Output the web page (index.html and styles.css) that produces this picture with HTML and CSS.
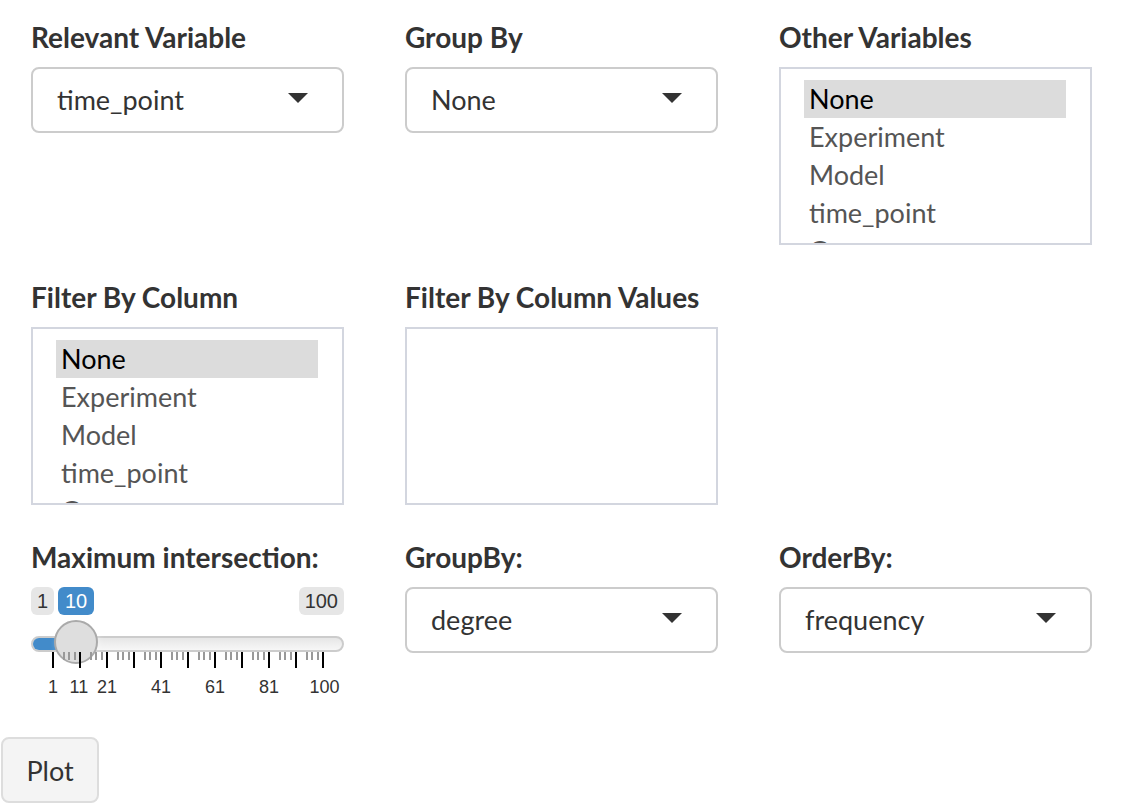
FILE: index.html
```html
<!DOCTYPE html>
<html>
<head>
<meta charset="utf-8">
<link rel="stylesheet" href="styles.css">
</head>
<body>
<div class="page">
  <div class="row">
    <div class="group">
      <label class="label">Relevant Variable</label>
      <div class="select"><span class="select-text">time_point</span><span class="caret"></span></div>
    </div>
    <div class="group">
      <label class="label">Group By</label>
      <div class="select"><span class="select-text">None</span><span class="caret"></span></div>
    </div>
    <div class="group">
      <label class="label">Other Variables</label>
      <div class="listbox">
        <div class="opt selected">None</div>
        <div class="opt">Experiment</div>
        <div class="opt">Model</div>
        <div class="opt">time_point</div>
        <div class="opt">Group</div>
      </div>
    </div>
  </div>
  <div class="row">
    <div class="group">
      <label class="label">Filter By Column</label>
      <div class="listbox">
        <div class="opt selected">None</div>
        <div class="opt">Experiment</div>
        <div class="opt">Model</div>
        <div class="opt">time_point</div>
        <div class="opt">Group</div>
      </div>
    </div>
    <div class="group">
      <label class="label">Filter By Column Values</label>
      <div class="listbox"></div>
    </div>
    <div class="group"></div>
  </div>
  <div class="row">
    <div class="group">
      <label class="label">Maximum intersection:</label>
      <div class="slider">
        <span class="bubble bubble-min">1</span>
        <span class="bubble bubble-val">10</span>
        <span class="bubble bubble-max">100</span>
        <div class="track"><div class="bar"></div></div>
        <div class="handle"></div>
        <div class="grid">
          <span class="pol" style="left:0%"></span>
          <span class="pol small" style="left:4%"></span><span class="pol small" style="left:6%"></span><span class="pol small" style="left:8%"></span>
          <span class="pol" style="left:10%"></span>
          <span class="pol small" style="left:14%"></span><span class="pol small" style="left:16%"></span><span class="pol small" style="left:18%"></span>
          <span class="pol" style="left:20%"></span>
          <span class="pol small" style="left:24%"></span><span class="pol small" style="left:26%"></span><span class="pol small" style="left:28%"></span>
          <span class="pol" style="left:30%"></span>
          <span class="pol small" style="left:34%"></span><span class="pol small" style="left:36%"></span><span class="pol small" style="left:38%"></span>
          <span class="pol" style="left:40%"></span>
          <span class="pol small" style="left:44%"></span><span class="pol small" style="left:46%"></span><span class="pol small" style="left:48%"></span>
          <span class="pol" style="left:50%"></span>
          <span class="pol small" style="left:54%"></span><span class="pol small" style="left:56%"></span><span class="pol small" style="left:58%"></span>
          <span class="pol" style="left:60%"></span>
          <span class="pol small" style="left:64%"></span><span class="pol small" style="left:66%"></span><span class="pol small" style="left:68%"></span>
          <span class="pol" style="left:70%"></span>
          <span class="pol small" style="left:74%"></span><span class="pol small" style="left:76%"></span><span class="pol small" style="left:78%"></span>
          <span class="pol" style="left:80%"></span>
          <span class="pol small" style="left:84%"></span><span class="pol small" style="left:86%"></span><span class="pol small" style="left:88%"></span>
          <span class="pol" style="left:90%"></span>
          <span class="pol small" style="left:94%"></span><span class="pol small" style="left:96%"></span><span class="pol small" style="left:98%"></span>
          <span class="pol" style="left:100%"></span>
          <span class="gtext" style="left:0%">1</span>
          <span class="gtext" style="left:9.6%">11</span>
          <span class="gtext" style="left:20%">21</span>
          <span class="gtext" style="left:40%">41</span>
          <span class="gtext" style="left:60%">61</span>
          <span class="gtext" style="left:80%">81</span>
          <span class="gtext" style="left:100.6%">100</span>
        </div>
      </div>
    </div>
    <div class="group">
      <label class="label">GroupBy:</label>
      <div class="select"><span class="select-text">degree</span><span class="caret"></span></div>
    </div>
    <div class="group">
      <label class="label">OrderBy:</label>
      <div class="select"><span class="select-text">frequency</span><span class="caret"></span></div>
    </div>
  </div>
  <button class="btn">Plot</button>
</div>
</body>
</html>
```

FILE: styles.css
```css
html, body {
  margin: 0;
  padding: 0;
  background: #fff;
}
body {
  font-family: "Lato", "Open Sans", sans-serif;
  color: #333;
  font-size: 28px;
}
.page {
  padding-top: 17px;
}
.row {
  display: grid;
  grid-template-columns: 313px 313px 313px;
  column-gap: 61px;
  padding-left: 31px;
}
.group {
  margin-bottom: 32px;
  min-width: 0;
}
.label {
  display: block;
  font-weight: 700;
  font-size: 28px;
  line-height: 40px;
  margin-bottom: 10px;
  color: #333;
  white-space: nowrap;
}
.select {
  box-sizing: border-box;
  height: 66px;
  border: 2px solid #cccccc;
  border-radius: 8px;
  display: flex;
  align-items: center;
  justify-content: space-between;
  padding: 0 34px 0 24px;
  background: #fff;
}
.select-text {
  font-size: 27px;
  color: #333;
  line-height: 40px;
}
.caret {
  width: 0;
  height: 0;
  border-left: 10px solid transparent;
  border-right: 10px solid transparent;
  border-top: 10px solid #333;
  margin-top: -4px;
}
.listbox {
  box-sizing: border-box;
  height: 178px;
  border: 2px solid #d3d6df;
  padding: 11px 24px 0 23px;
  overflow: hidden;
}
.opt {
  height: 38px;
  line-height: 38px;
  padding-left: 5px;
  font-size: 27px;
  color: #555;
  white-space: nowrap;
}
.opt.selected {
  background: #dcdcdc;
  color: #000;
}
.slider {
  position: relative;
  height: 118px;
}
.bubble {
  position: absolute;
  top: 0;
  font-family: "Liberation Sans", Arial, sans-serif;
  font-size: 20px;
  line-height: 24px;
  padding: 2px 6px;
  border-radius: 6px;
  background: #e6e6e6;
  color: #333;
}
.bubble-min {
  left: 0;
}
.bubble-max {
  right: 0;
}
.bubble-val {
  left: 27px;
  background: #428bca;
  color: #fff;
  padding: 2px 7px;
}
.track {
  position: absolute;
  left: 0;
  right: 0;
  top: 49px;
  height: 16px;
  box-sizing: border-box;
  border: 2px solid #cccccc;
  border-radius: 16px;
  background: linear-gradient(to bottom, #dedede -50%, #ffffff 150%);
  overflow: hidden;
}
.bar {
  position: absolute;
  left: -2px;
  top: -2px;
  bottom: -2px;
  width: 48px;
  background: #428bca;
}
.handle {
  position: absolute;
  left: 23px;
  top: 33px;
  width: 44px;
  height: 44px;
  box-sizing: border-box;
  border: 2px solid #aaaaaa;
  border-radius: 50%;
  background: #dedede;
  box-shadow: 2px 2px 6px rgba(255,255,255,0.3);
}
.grid {
  position: absolute;
  left: 22px;
  width: 270px;
  top: 65px;
  height: 50px;
}
.pol {
  position: absolute;
  top: 0;
  width: 2px;
  height: 16px;
  background: #000;
  margin-left: -1px;
}
.pol.small {
  height: 8px;
  background: #999;
}
.gtext {
  position: absolute;
  top: 25px;
  transform: translateX(-50%);
  font-family: "Liberation Sans", Arial, sans-serif;
  font-size: 18px;
  line-height: 20px;
  color: #333;
  white-space: nowrap;
}
.btn {
  margin-left: 1px;
  margin-top: 0;
  height: 66px;
  width: 98px;
  box-sizing: border-box;
  background: #f4f4f4;
  border: 2px solid #dddddd;
  border-radius: 8px;
  font-family: "Lato", "Open Sans", sans-serif;
  font-size: 27px;
  color: #333;
  padding: 0;
}
```
